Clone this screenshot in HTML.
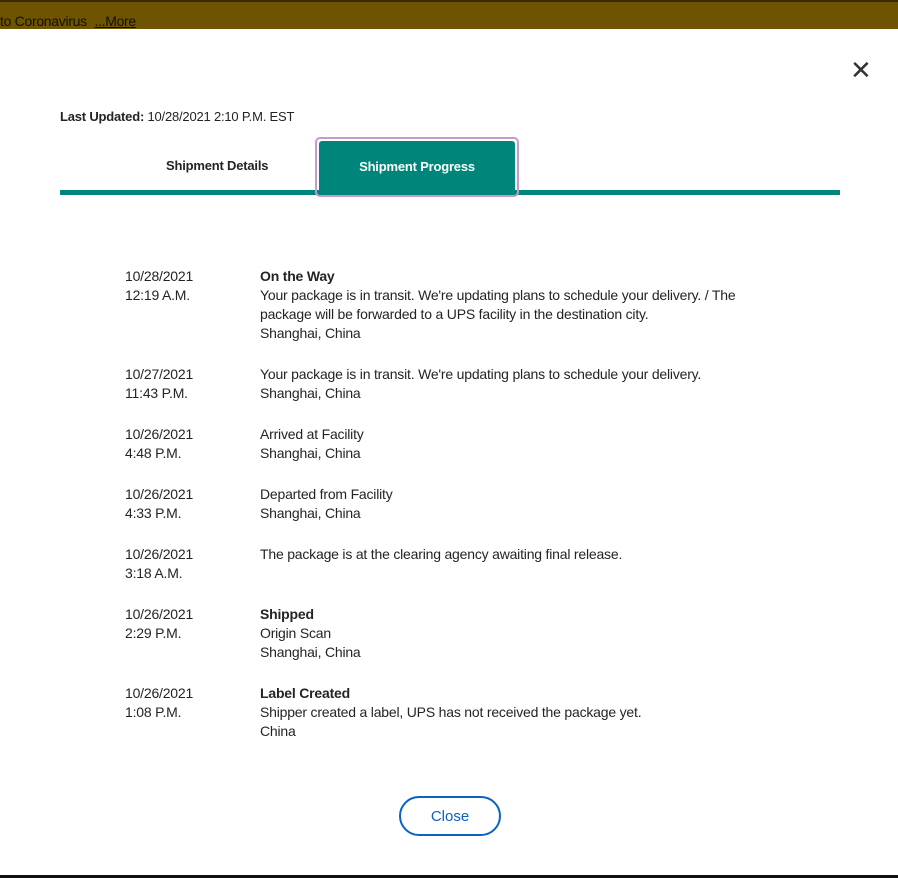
<!DOCTYPE html>
<html><head><style>
body{margin:0;width:898px;height:878px;position:relative;background:#fff;font-family:"Liberation Sans",Arial,sans-serif;color:#242424;overflow:hidden}
.top{position:absolute;left:0;top:0;width:898px;height:29px;background:#6e5400;border-top:2px solid #3a2a00;box-sizing:border-box}
.top span{position:absolute;left:0;top:11px;font-size:14px;color:#111;letter-spacing:-0.3px}
.top u{margin-left:4px}
.x{position:absolute;left:850px;top:55px;font-size:26px;color:#333}
.lu{position:absolute;left:60px;top:109px;font-size:13px;letter-spacing:-0.2px}
.bar{position:absolute;left:60px;top:190px;width:780px;height:5px;background:#00857a}
.t1{position:absolute;left:166px;top:158px;font-size:13px;font-weight:bold;letter-spacing:-0.2px}
.t2{position:absolute;left:315px;top:137px;width:204px;height:60px;border:2px solid #c49bcc;border-radius:5px;box-sizing:border-box;padding:2px}
.t2 div{background:#00857a;height:100%;border-radius:3px;color:#fff;font-size:13px;font-weight:bold;text-align:center;line-height:52px;letter-spacing:-0.2px}
.list{position:absolute;left:125px;top:267px;font-size:14px;line-height:19px;letter-spacing:-0.2px}
.row{display:flex;margin-bottom:22px}
.d{width:135px}
b{font-weight:bold}
.btn{position:absolute;left:399px;top:796px;width:102px;height:40px;border:2px solid #0a62c4;border-radius:20px;box-sizing:border-box;color:#0a62c4;font-size:15px;text-align:center;line-height:38px}
.bot{position:absolute;left:0;top:875px;width:898px;height:3px;background:#111}
</style></head><body>
<div class="top"><span>to Coronavirus <u>...More</u></span></div>
<div class="x">✕</div>
<div class="lu"><b>Last Updated:</b> 10/28/2021 2:10 P.M. EST</div>
<div class="t1">Shipment Details</div>
<div class="bar"></div>
<div class="t2"><div>Shipment Progress</div></div>
<div class="list">
<div class="row"><div class="d">10/28/2021<br>12:19 A.M.</div><div><b>On the Way</b><br>Your package is in transit. We're updating plans to schedule your delivery. / The<br>package will be forwarded to a UPS facility in the destination city.<br>Shanghai, China</div></div>
<div class="row"><div class="d">10/27/2021<br>11:43 P.M.</div><div>Your package is in transit. We're updating plans to schedule your delivery.<br>Shanghai, China</div></div>
<div class="row"><div class="d">10/26/2021<br>4:48 P.M.</div><div>Arrived at Facility<br>Shanghai, China</div></div>
<div class="row"><div class="d">10/26/2021<br>4:33 P.M.</div><div>Departed from Facility<br>Shanghai, China</div></div>
<div class="row"><div class="d">10/26/2021<br>3:18 A.M.</div><div>The package is at the clearing agency awaiting final release.</div></div>
<div class="row"><div class="d">10/26/2021<br>2:29 P.M.</div><div><b>Shipped</b><br>Origin Scan<br>Shanghai, China</div></div>
<div class="row"><div class="d">10/26/2021<br>1:08 P.M.</div><div><b>Label Created</b><br>Shipper created a label, UPS has not received the package yet.<br>China</div></div>
</div>
<div class="btn">Close</div>
<div class="bot"></div>
</body></html>
